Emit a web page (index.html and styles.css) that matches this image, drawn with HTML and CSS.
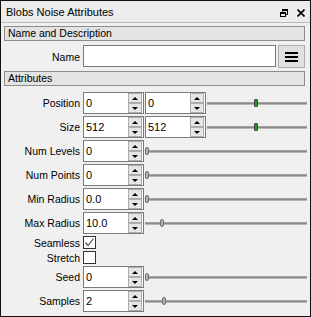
FILE: index.html
```html
<!DOCTYPE html>
<html>
<head>
<meta charset="utf-8">
<link rel="stylesheet" href="styles.css">
</head>
<body>
<div class="window">
  <div class="titlebar">
    <span class="title">Blobs Noise Attributes</span>
    <span class="tb-icons">
      <svg class="tb-icon" width="8" height="8" viewBox="0 0 8 8"><path d="M2.5 2.5V0.5h5v5h-2" fill="none" stroke="#000" stroke-width="1"/><rect x="2" y="0" width="6" height="2" fill="#000"/><rect x="0.5" y="3.5" width="5" height="4" fill="none" stroke="#000" stroke-width="1"/><rect x="0" y="3" width="6" height="2" fill="#000"/></svg>
      <svg class="tb-icon" width="8" height="8" viewBox="0 0 8 8"><path d="M0.5 0.5L7.5 7.5M7.5 0.5L0.5 7.5" stroke="#000" stroke-width="1.6"/></svg>
    </span>
  </div>
  <div class="content">
    <div class="group-header">Name and Description</div>
    <div class="name-row">
      <span class="lbl">Name</span>
      <div class="text-input"></div>
      <div class="menu-btn">
        <svg width="13" height="10" viewBox="0 0 13 10"><rect x="0" y="0" width="13" height="2" fill="#000"/><rect x="0" y="4" width="13" height="2" fill="#000"/><rect x="0" y="8" width="13" height="2" fill="#000"/></svg>
      </div>
    </div>
    <div class="group-header gh2">Attributes</div>
    <div class="attrs">
      <div class="row">
        <span class="lbl">Position</span>
        <div class="spin"><span class="val">0</span><div class="spin-btns"><div class="sb"><span class="up"></span></div><div class="sb"><span class="down"></span></div></div></div>
        <div class="spin spin2"><span class="val">0</span><div class="spin-btns"><div class="sb"><span class="up"></span></div><div class="sb"><span class="down"></span></div></div></div>
        <div class="slider"><div class="groove"></div><div class="handle green" style="left:47px"></div></div>
      </div>
      <div class="row">
        <span class="lbl">Size</span>
        <div class="spin"><span class="val">512</span><div class="spin-btns"><div class="sb"><span class="up"></span></div><div class="sb"><span class="down"></span></div></div></div>
        <div class="spin spin2"><span class="val">512</span><div class="spin-btns"><div class="sb"><span class="up"></span></div><div class="sb"><span class="down"></span></div></div></div>
        <div class="slider"><div class="groove"></div><div class="handle green" style="left:47px"></div></div>
      </div>
      <div class="row">
        <span class="lbl">Num Levels</span>
        <div class="spin"><span class="val">0</span><div class="spin-btns"><div class="sb"><span class="up"></span></div><div class="sb"><span class="down"></span></div></div></div>
        <div class="slider"><div class="groove"></div><div class="handle" style="left:0px"></div></div>
      </div>
      <div class="row">
        <span class="lbl">Num Points</span>
        <div class="spin"><span class="val">0</span><div class="spin-btns"><div class="sb"><span class="up"></span></div><div class="sb"><span class="down"></span></div></div></div>
        <div class="slider"><div class="groove"></div><div class="handle" style="left:0px"></div></div>
      </div>
      <div class="row">
        <span class="lbl">Min Radius</span>
        <div class="spin"><span class="val">0.0</span><div class="spin-btns"><div class="sb"><span class="up"></span></div><div class="sb"><span class="down"></span></div></div></div>
        <div class="slider"><div class="groove"></div><div class="handle" style="left:0px"></div></div>
      </div>
      <div class="row">
        <span class="lbl">Max Radius</span>
        <div class="spin"><span class="val">10.0</span><div class="spin-btns"><div class="sb"><span class="up"></span></div><div class="sb"><span class="down"></span></div></div></div>
        <div class="slider"><div class="groove"></div><div class="handle" style="left:15px"></div></div>
      </div>
      <div class="row check">
        <span class="lbl">Seamless</span>
        <div class="checkbox"><svg width="11" height="11" viewBox="0 0 11 11"><path d="M1.5 5.5L4 8.5L9.5 1.5" fill="none" stroke="#4d4d4d" stroke-width="1.2"/></svg></div>
      </div>
      <div class="row check">
        <span class="lbl">Stretch</span>
        <div class="checkbox"></div>
      </div>
      <div class="row">
        <span class="lbl">Seed</span>
        <div class="spin"><span class="val">0</span><div class="spin-btns"><div class="sb"><span class="up"></span></div><div class="sb"><span class="down"></span></div></div></div>
        <div class="slider"><div class="groove"></div><div class="handle" style="left:0px"></div></div>
      </div>
      <div class="row">
        <span class="lbl">Samples</span>
        <div class="spin"><span class="val">2</span><div class="spin-btns"><div class="sb"><span class="up"></span></div><div class="sb"><span class="down"></span></div></div></div>
        <div class="slider"><div class="groove"></div><div class="handle" style="left:17px"></div></div>
      </div>
    </div>
  </div>
</div>
</body>
</html>
```
FILE: styles.css
```css
html, body {
  margin: 0;
  padding: 0;
  background: #f0f0f0;
}
body {
  font-family: "Liberation Sans", Arial, sans-serif;
  font-size: 10.5px;
  color: #000;
}
.window {
  width: 311px;
  height: 317px;
  box-sizing: border-box;
  border: 1px solid #111;
  background: #f0f0f0;
  display: flex;
  flex-direction: column;
}
.titlebar {
  box-sizing: border-box;
  height: 22px;
  border-bottom: 1px solid #b9b9b9;
  background: #ececec;
  display: flex;
  align-items: center;
  padding: 2px 5px 0 5px;
}
.title {
  flex: 1;
  font-size: 11px;
  line-height: 13px;
}
.tb-icons {
  display: flex;
  align-items: center;
  gap: 9px;
  margin-top: 1px;
}
.tb-icon {
  display: block;
}
.content {
  padding: 3px 5px 0 3px;
  display: flex;
  flex-direction: column;
}
.group-header {
  height: 15px;
  box-sizing: border-box;
  border: 1px solid #8c8c8c;
  background: #e3e3e3;
  padding-left: 3px;
  line-height: 12px;
}
.name-row {
  display: flex;
  align-items: center;
  margin-top: 4px;
  height: 23px;
}
.lbl {
  width: 76px;
  text-align: right;
  flex: none;
  white-space: nowrap;
}
.text-input {
  width: 193px;
  height: 22px;
  box-sizing: border-box;
  border: 1px solid #7a7a7a;
  background: #fff;
  margin-left: 3px;
  align-self: flex-start;
}
.menu-btn {
  width: 27px;
  height: 23px;
  box-sizing: border-box;
  border: 1px solid #adadad;
  background: #e1e1e1;
  margin-left: 2px;
  display: flex;
  align-items: center;
  justify-content: center;
}
.menu-btn svg {
  display: block;
}
.gh2 {
  margin-top: 3px;
}
.attrs {
  margin-top: 6px;
  display: flex;
  flex-direction: column;
  gap: 2px;
}
.row {
  display: flex;
  align-items: center;
  height: 22px;
}
.row.check {
  height: 13px;
}
.spin {
  width: 61px;
  height: 22px;
  box-sizing: border-box;
  border: 1px solid #7a7a7a;
  background: #fff;
  margin-left: 3px;
  display: flex;
  align-items: center;
  flex: none;
  font-size: 11px;
}
.spin2 {
  margin-left: 1px;
}
.val {
  flex: 1;
  padding-left: 2px;
}
.spin-btns {
  width: 14px;
  align-self: stretch;
  margin-right: 1px;
  display: flex;
  flex-direction: column;
}
.sb {
  flex: 1;
  box-sizing: border-box;
  border: 1px solid #adadad;
  background: #e6e6e6;
  display: flex;
  align-items: center;
  justify-content: center;
}
.up {
  width: 0;
  height: 0;
  border-left: 3px solid transparent;
  border-right: 3px solid transparent;
  border-bottom: 3px solid #000;
}
.down {
  width: 0;
  height: 0;
  border-left: 3px solid transparent;
  border-right: 3px solid transparent;
  border-top: 3px solid #000;
}
.slider {
  flex: 1;
  height: 9px;
  margin-left: 1px;
  margin-right: -2px;
  position: relative;
  display: flex;
  align-items: center;
}
.groove {
  width: 100%;
  height: 3px;
  box-sizing: border-box;
  background: #8a8a8a;
  border-top: 1px solid #a4a4a4;
  border-bottom: 1px solid #b8b8b8;
}
.handle {
  position: absolute;
  top: 0;
  width: 4px;
  height: 8px;
  box-sizing: border-box;
  border: 1px solid #6e6e6e;
  border-radius: 2px;
  background: #b4b4b4;
}
.handle.green {
  background: #1e9a1e;
  border-color: #4a4a4a;
  border-radius: 1px;
}
.checkbox {
  width: 13px;
  height: 13px;
  box-sizing: border-box;
  border: 1px solid #333;
  background: #fff;
  margin-left: 3px;
  display: flex;
  align-items: center;
  justify-content: center;
}
.checkbox svg {
  display: block;
}
```
